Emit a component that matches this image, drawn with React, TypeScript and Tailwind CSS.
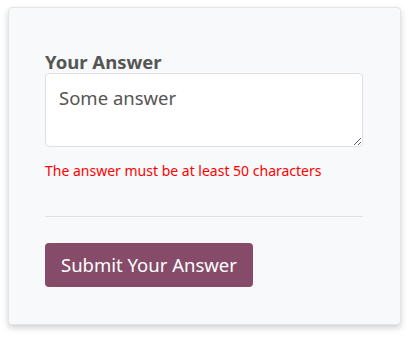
import React from "react";

export default function App() {
  return (
    <div className="w-[408px] h-[337px] bg-white pt-[7px] pl-[8px]" style={{ fontFamily: '"Noto Sans", "Open Sans", sans-serif' }}>
      <div className="w-[393px] h-[318px] bg-[#f8f9fa] border border-[#e3e5e8] rounded-[4px] shadow-[0_3px_6px_rgba(0,0,0,0.18)] pl-[36px] pr-[38px] pt-[42px]">
        <label className="block text-[18.5px] leading-[23px] font-bold text-[#555]">Your Answer</label>
        <textarea
          className="block w-[318px] h-[74px] bg-white border border-[#dee2e6] rounded-[4px] px-[13px] py-[10px] text-[18.5px] leading-[28px] text-[#555] resize-y outline-none"
          defaultValue="Some answer"
        />
        <div className="mt-[14px] text-[14px] leading-[20px] text-[#ff0000]">The answer must be at least 50 characters</div>
        <div className="mt-[35px] h-px w-[318px] bg-[#dee2e6]" />
        <button className="mt-[26px] h-[44px] px-[16px] rounded-[4px] bg-[#854b68] text-white text-[18.5px] leading-[24px]">Submit Your Answer</button>
      </div>
    </div>
  );
}
